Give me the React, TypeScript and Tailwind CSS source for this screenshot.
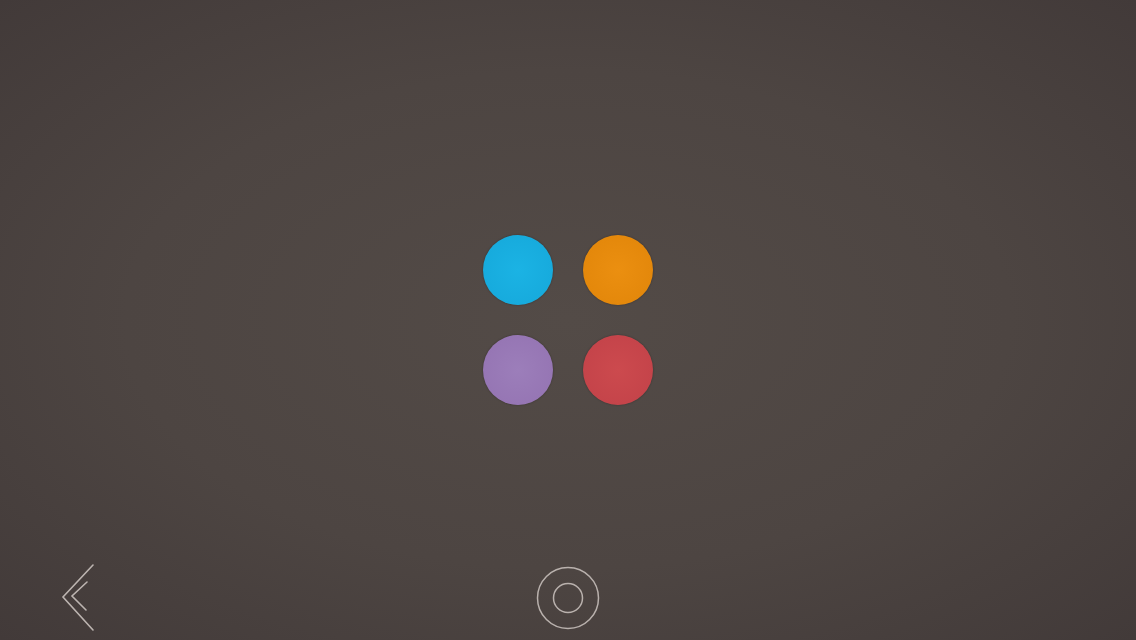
const dots = [
  "bg-[radial-gradient(circle,#1bb3e4_0%,#17abdd_70%,#1499c8_100%)]",
  "bg-[radial-gradient(circle,#eb8f10_0%,#e4880b_70%,#d27b08_100%)]",
  "bg-[radial-gradient(circle,#9c7eba_0%,#9676b4_70%,#8769a6_100%)]",
  "bg-[radial-gradient(circle,#cc4a4e_0%,#c5444a_70%,#b33a40_100%)]",
];

export default function App() {
  return (
    <div className="flex h-[640px] w-full flex-col overflow-hidden bg-[radial-gradient(ellipse_at_center,#534b47_0%,#4d4542_55%,#423a39_100%)] font-['Liberation_Sans',sans-serif]">
      {/* Color picker */}
      <div className="flex justify-center pt-[235px]">
        <div className="grid grid-cols-2 gap-[30px]">
          {dots.map((c) => (
            <button
              key={c}
              type="button"
              className={`h-[70px] w-[70px] rounded-full shadow-[0_0_2px_rgba(0,0,0,0.35)] ${c}`}
            />
          ))}
        </div>
      </div>

      {/* Bottom nav */}
      <div className="mt-auto mb-[8px] grid h-[68px] grid-cols-3 items-center">
        <div className="pl-[58px]">
          <svg width="40" height="68" viewBox="0 0 40 68" fill="none" stroke="#bcb4b0" strokeWidth="1.6" strokeLinecap="round" strokeLinejoin="miter">
            <path d="M35 1 L5 33 L35 66" />
            <path d="M29 18 L14 32 L28 46" />
          </svg>
        </div>
        <div className="flex justify-center">
          <svg width="64" height="64" viewBox="0 0 64 64" fill="none" stroke="#b9b1ad" strokeWidth="1.5">
            <circle cx="32" cy="32" r="30.5" />
            <circle cx="32" cy="32" r="14.5" />
          </svg>
        </div>
        <div />
      </div>
    </div>
  );
}
